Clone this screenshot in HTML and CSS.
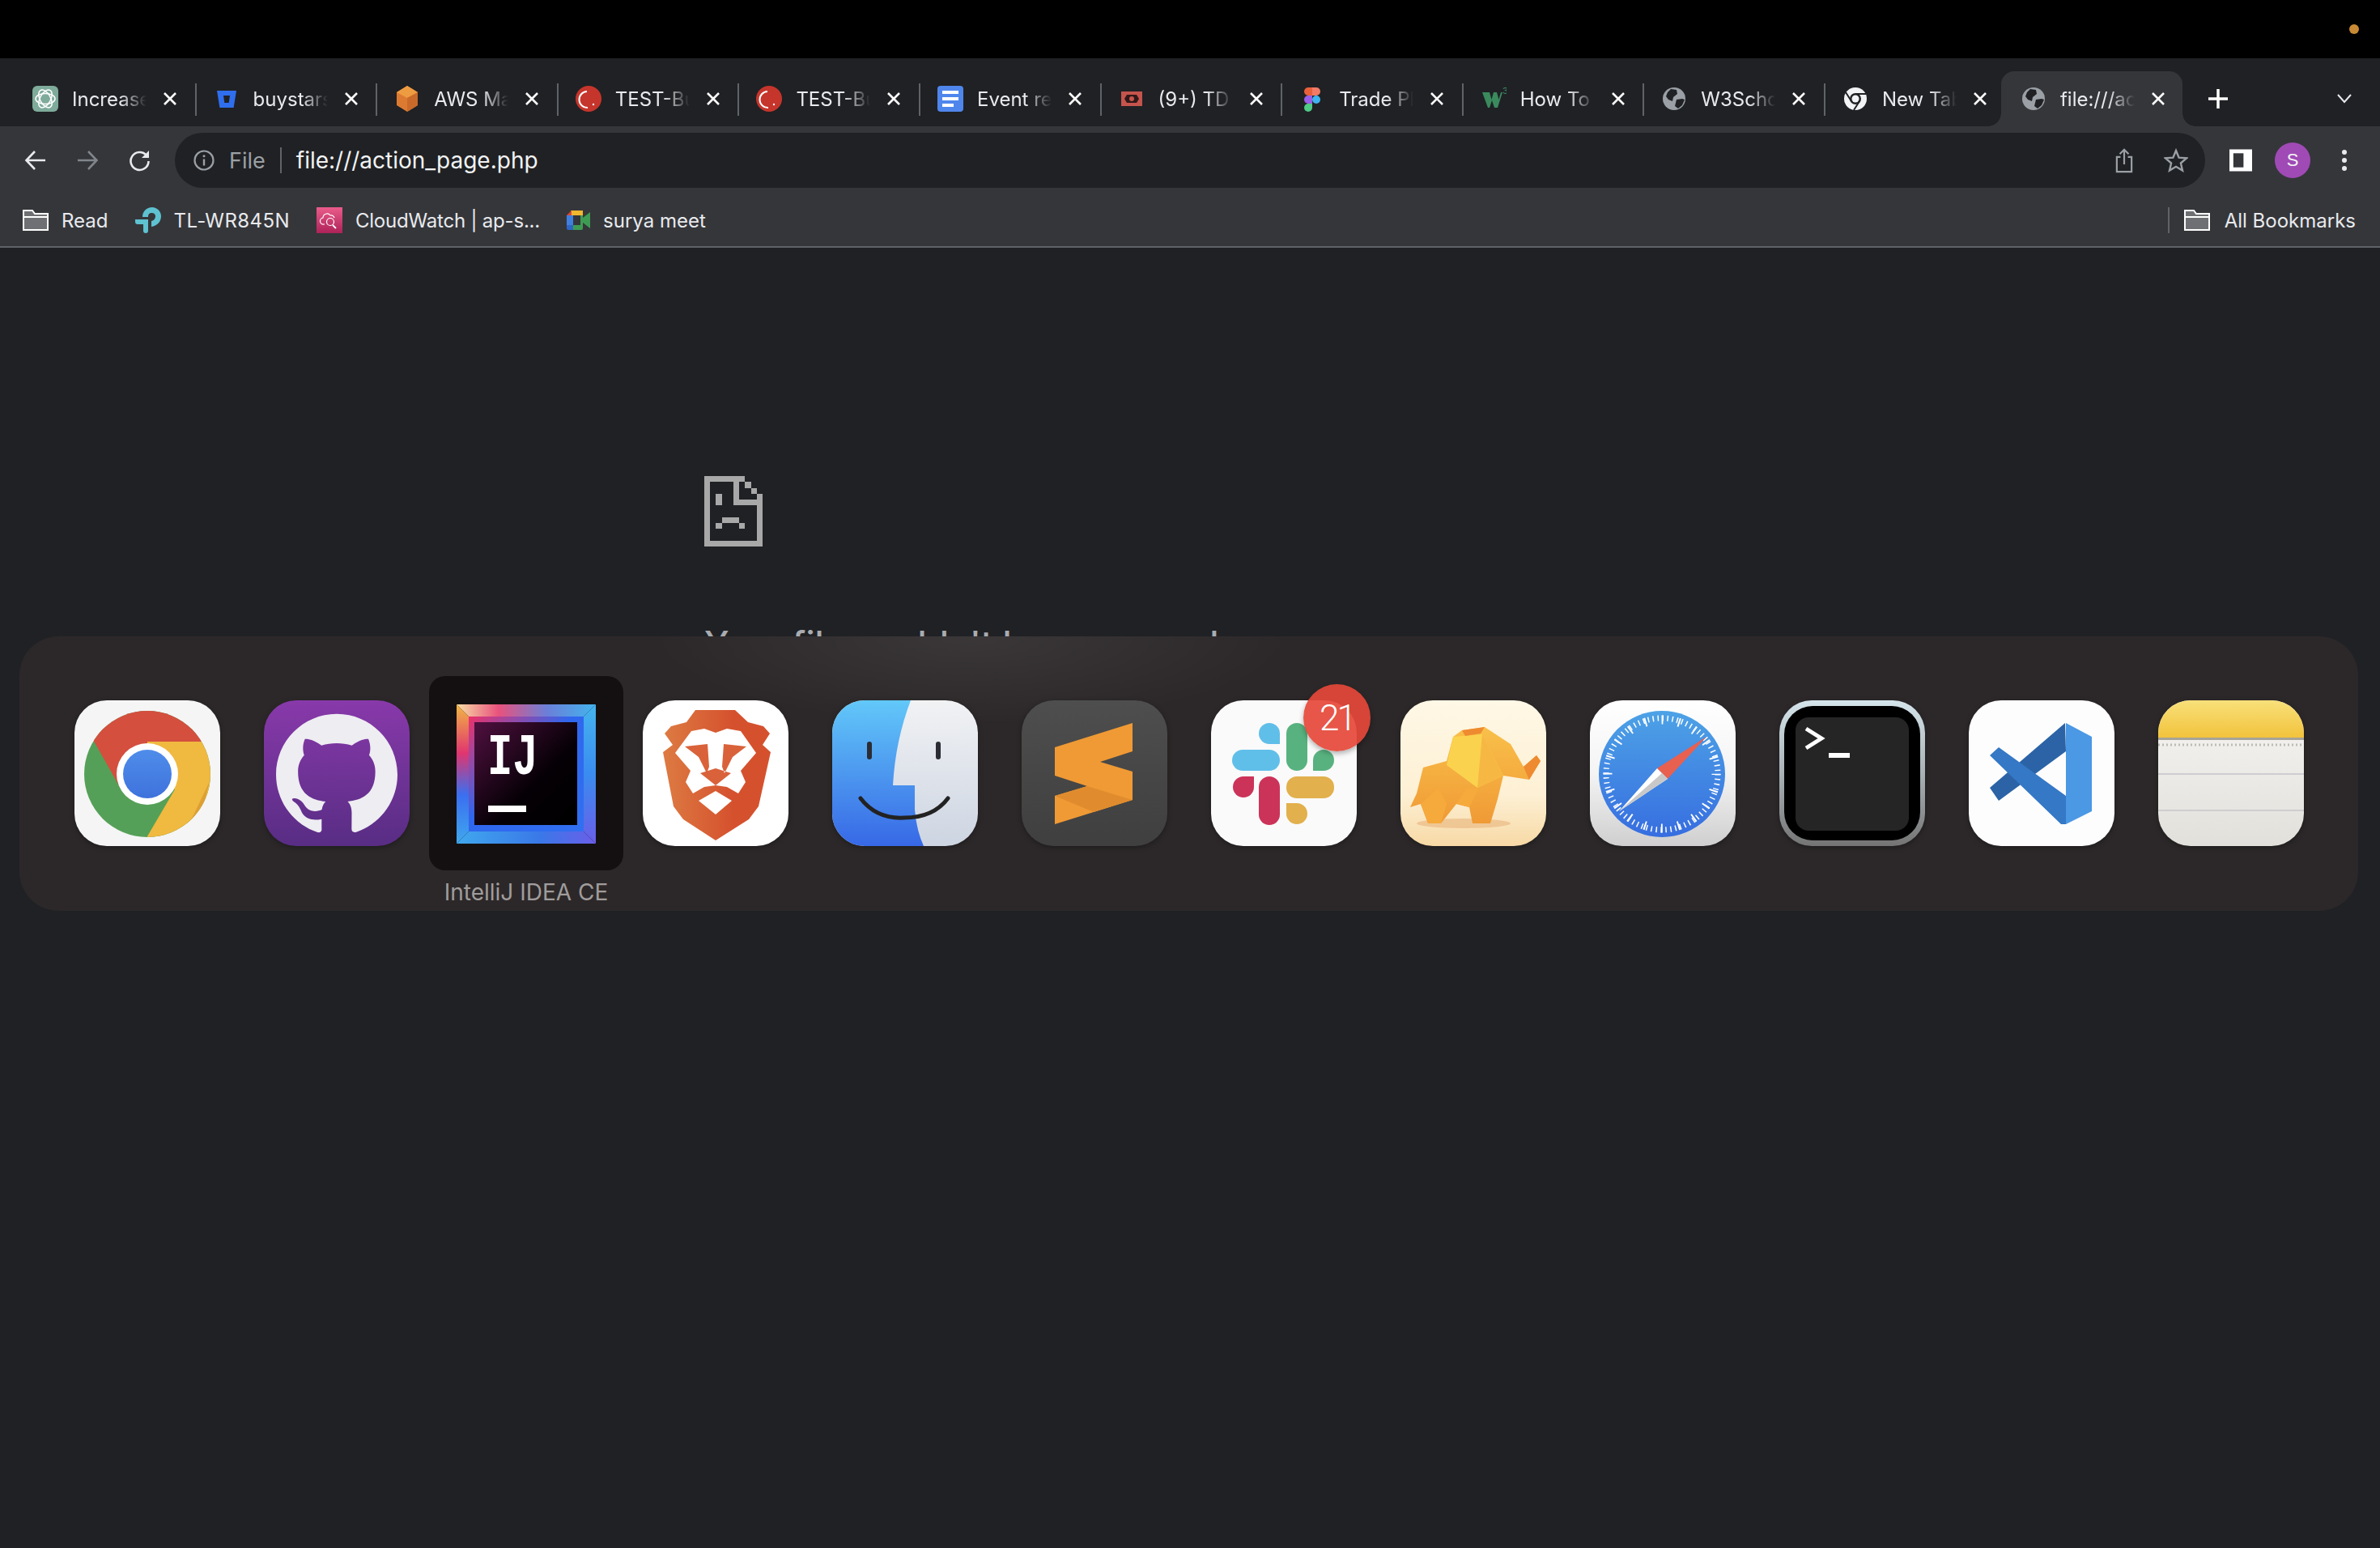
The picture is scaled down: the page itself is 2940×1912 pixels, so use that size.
FILE: index.html
```html
<!DOCTYPE html>
<html lang="en">

<head>
    <meta charset="UTF-8">
    <title>file:///action_page.php</title>
    <link rel="stylesheet" href="styles.css">
</head>

<body>
    <!-- menu bar -->
    <div class="menubar"><span class="mic-dot"></span></div>

    <!-- tabs -->
    <div class="tabstrip">
        <div class="tab">
            <svg class="favicon" viewBox="0 0 32 32"><rect width="32" height="32" rx="6" fill="#7fab9b"/><g fill="none" stroke="#fff" stroke-width="1.500"><ellipse cx="16" cy="16" rx="12" ry="6.500"/><ellipse cx="16" cy="16" rx="12" ry="6.500" transform="rotate(60 16 16)"/><ellipse cx="16" cy="16" rx="12" ry="6.500" transform="rotate(120 16 16)"/></g></svg>
            <span class="tab-title">Increase</span>
            <svg class="tab-close" viewBox="0 0 16 16"><use href="#closeX"/></svg>
        </div>
        <i class="tab-sep"></i>
        <div class="tab">
            <svg class="favicon" viewBox="0 0 32 32"><path d="M4 6h24l-3.400 21H7.400z" fill="#2f6fed"/><path d="M12 12h8l-1.300 9h-5.400z" fill="#202124"/></svg>
            <span class="tab-title">buystars</span>
            <svg class="tab-close" viewBox="0 0 16 16"><use href="#closeX"/></svg>
        </div>
        <i class="tab-sep"></i>
        <div class="tab">
            <svg class="favicon" viewBox="0 0 32 32"><path d="M16 0l13 8v16l-13 8-13-8V8z" fill="#dd7a32"/><path d="M16 0l13 8-13 7-13-7z" fill="#ee9c42"/><path d="M16 15l13-7v16l-13 8z" fill="#c96a2a"/></svg>
            <span class="tab-title">AWS Ma</span>
            <svg class="tab-close" viewBox="0 0 16 16"><use href="#closeX"/></svg>
        </div>
        <i class="tab-sep"></i>
        <div class="tab">
            <svg class="favicon" viewBox="0 0 32 32"><circle cx="16" cy="16" r="16" fill="#c5352c"/><path d="M14 7a10 10 0 0 0 1 20" fill="none" stroke="#fff" stroke-width="2"/><circle cx="22" cy="23" r="1.200" fill="#fff"/></svg>
            <span class="tab-title">TEST-Bu</span>
            <svg class="tab-close" viewBox="0 0 16 16"><use href="#closeX"/></svg>
        </div>
        <i class="tab-sep"></i>
        <div class="tab">
            <svg class="favicon" viewBox="0 0 32 32"><circle cx="16" cy="16" r="16" fill="#c5352c"/><path d="M14 7a10 10 0 0 0 1 20" fill="none" stroke="#fff" stroke-width="2"/><circle cx="22" cy="23" r="1.200" fill="#fff"/></svg>
            <span class="tab-title">TEST-Bu</span>
            <svg class="tab-close" viewBox="0 0 16 16"><use href="#closeX"/></svg>
        </div>
        <i class="tab-sep"></i>
        <div class="tab">
            <svg class="favicon" viewBox="0 0 32 32"><rect width="32" height="32" rx="4" fill="#4f86ec"/><path d="M6 6h20v4H6zM6 14h20v4H6zM6 22h14v4H6z" fill="#fff"/></svg>
            <span class="tab-title">Event re</span>
            <svg class="tab-close" viewBox="0 0 16 16"><use href="#closeX"/></svg>
        </div>
        <i class="tab-sep"></i>
        <div class="tab">
            <svg class="favicon" viewBox="0 0 32 32"><rect x="3" y="7" width="26" height="18" fill="#c5544d"/><path d="M7 16l3-5h12l3 5-3 5H10z" fill="#301818"/><ellipse cx="16" cy="16" rx="3" ry="3" fill="#c5544d"/></svg>
            <span class="tab-title">(9+) TD</span>
            <svg class="tab-close" viewBox="0 0 16 16"><use href="#closeX"/></svg>
        </div>
        <i class="tab-sep"></i>
        <div class="tab">
            <svg class="favicon" viewBox="0 0 32 32"><path d="M6 7a5 5 0 0 1 5-5h5v10h-5a5 5 0 0 1-5-5z" fill="#e8603c"/><path d="M16 2h5a5 5 0 0 1 0 10h-5z" fill="#f27a66"/><path d="M6 17a5 5 0 0 1 5-5h5v10h-5a5 5 0 0 1-5-5z" fill="#9a5ee8"/><circle cx="21" cy="17" r="5" fill="#3fb4f0"/><path d="M6 27a5 5 0 0 1 5-5h5v5a5 5 0 0 1-10 0z" fill="#4fcb85"/></svg>
            <span class="tab-title">Trade Pl</span>
            <svg class="tab-close" viewBox="0 0 16 16"><use href="#closeX"/></svg>
        </div>
        <i class="tab-sep"></i>
        <div class="tab">
            <svg class="favicon" viewBox="0 0 32 32"><path d="M2 8h9l2.500 9L16 8h4l2.500 9L25 8h2l-6 19h-4l-3-9-3 9H9z" fill="#3a8a5e"/><text x="27" y="10" class="w3-mark">3</text></svg>
            <span class="tab-title">How To</span>
            <svg class="tab-close" viewBox="0 0 16 16"><use href="#closeX"/></svg>
        </div>
        <i class="tab-sep"></i>
        <div class="tab">
            <svg class="favicon" viewBox="0 0 32 32"><use href="#globe"/></svg>
            <span class="tab-title">W3Schoo</span>
            <svg class="tab-close" viewBox="0 0 16 16"><use href="#closeX"/></svg>
        </div>
        <i class="tab-sep"></i>
        <div class="tab">
            <svg class="favicon" viewBox="0 0 32 32"><circle cx="16" cy="16" r="14" fill="#f1f3f4"/><path d="M16 10h13M21 19l-7 11M11 19L4 8" stroke="#202124" stroke-width="2" fill="none"/><circle cx="16" cy="16" r="7" fill="#202124"/><circle cx="16" cy="16" r="4.500" fill="#f1f3f4"/></svg>
            <span class="tab-title">New Tab</span>
            <svg class="tab-close" viewBox="0 0 16 16"><use href="#closeX"/></svg>
        </div>
        <div class="tab tab-active">
            <svg class="favicon" viewBox="0 0 32 32"><use href="#globe"/></svg>
            <span class="tab-title">file:///ac</span>
            <svg class="tab-close" viewBox="0 0 16 16"><use href="#closeX"/></svg>
        </div>
        <svg class="newtab" viewBox="0 0 24 24"><path d="M12 0v24M0 12h24" stroke="#fff" stroke-width="3.500"/></svg>
        <svg class="tabmenu" viewBox="0 0 18 12"><path d="M1 1l8 9 8-9" fill="none" stroke="#e8eaed" stroke-width="2"/></svg>
    </div>

    <!-- toolbar -->
    <div class="toolbar">
        <div class="navrow">
            <button class="navbtn">
                <svg viewBox="0 0 28 28"><path d="M26 14H3M13 3L2.500 14 13 25" fill="none" stroke="#e8eaed" stroke-width="2.600"/></svg>
            </button>
            <button class="navbtn">
                <svg viewBox="0 0 28 28"><path d="M2 14h23M15 3l10.500 11L15 25" fill="none" stroke="#80868b" stroke-width="2.600"/></svg>
            </button>
            <button class="navbtn">
                <svg viewBox="0 0 28 28"><path d="M23 8a11 11 0 1 0 2.500 7" fill="none" stroke="#e8eaed" stroke-width="2.600"/><path d="M26 2v9h-9z" fill="#e8eaed"/></svg>
            </button>
            <div class="omnibox">
                <svg class="info-icon" viewBox="0 0 26 26"><circle cx="13" cy="13" r="11.500" fill="none" stroke="#9aa0a6" stroke-width="2.200"/><path d="M13 11.500v8" stroke="#9aa0a6" stroke-width="2.400"/><circle cx="13" cy="7.800" r="1.500" fill="#9aa0a6"/></svg>
                <span class="scheme">File</span>
                <i class="omni-sep"></i>
                <span class="url">file:///action_page.php</span>
                <svg class="share-icon" viewBox="0 0 24 34"><path d="M7 12H2v20h20V12h-5M12 22V2M6 8l6-6 6 6" fill="none" stroke="#9aa0a6" stroke-width="2.400"/></svg>
                <svg class="star-icon" viewBox="0 0 30 30"><path d="M15 3l3.600 8.600 9.400.8-7.100 6.100 2.100 9.100L15 22.800l-8 4.800 2.100-9.100L2 12.400l9.400-.8z" fill="none" stroke="#9aa0a6" stroke-width="2.400"/></svg>
            </div>
            <div class="tool-right">
                <button class="navbtn">
                    <svg class="panel-icon" viewBox="0 0 29 28"><rect x="2.500" y="2.500" width="24" height="23" fill="none" stroke="#fff" stroke-width="5"/><rect x="18" y="2" width="9" height="24" fill="#fff"/></svg>
                </button>
                <button class="navbtn"><span class="avatar">S</span></button>
                <button class="navbtn">
                    <svg class="dots" viewBox="0 0 6 28"><circle cx="3" cy="4" r="3" fill="#e8eaed"/><circle cx="3" cy="14" r="3" fill="#e8eaed"/><circle cx="3" cy="24" r="3" fill="#e8eaed"/></svg>
                </button>
            </div>
        </div>
        <div class="bookmarks">
            <div class="bm">
                <svg class="bm-icon" viewBox="0 0 32 26"><use href="#folder"/></svg>
                <span>Read</span>
            </div>
            <div class="bm bm-wide">
                <svg class="bm-icon" viewBox="0 0 32 32"><path d="M9 12C9 5 14 0 21 0c6 0 11 5 11 11 0 7-5 12-12 13v-7c3-.5 5-3 5-6 0-2.500-2-4-4.500-4S16 8 16 12z" fill="#5ec2d1"/><path d="M0 15h16v14a3 3 0 0 1-6 0v-8H3a3 3 0 0 1-3-3z" fill="#5ec2d1"/></svg>
                <span>TL-WR845N</span>
            </div>
            <div class="bm bm-narrow">
                <svg class="bm-icon" viewBox="0 0 32 32"><defs><linearGradient id="cwBg" x1="0" y1="0" x2="0" y2="1"><stop offset="0" stop-color="#ea5c8a"/><stop offset="1" stop-color="#ae2259"/></linearGradient></defs><rect width="32" height="32" fill="url(#cwBg)"/><path d="M10 21H9a4 4 0 0 1-1-8 5 5 0 0 1 9-3 4 4 0 0 1 5 3" fill="none" stroke="#fff" stroke-width="1.200"/><circle cx="17" cy="18" r="4.500" fill="none" stroke="#fff" stroke-width="1.200"/><path d="M20 22l4 4" stroke="#fff" stroke-width="1.800"/></svg>
                <span>CloudWatch | ap-s...</span>
            </div>
            <div class="bm">
                <svg class="meet-icon" viewBox="0 0 29 24"><path d="M5 0h15v6H5z" fill="#f0b72f"/><path d="M0 6l6-6v6z" fill="#d9493a"/><path d="M0 6h8v12H0z" fill="#3f7fe0"/><path d="M0 18h8v6H2a2 2 0 0 1-2-2z" fill="#2e66c7"/><path d="M8 18h12v4a2 2 0 0 1-2 2H8z" fill="#3e9c52"/><path d="M17 6h3v12h-3zM20 9l9-7v20l-9-7z" fill="#3e9c52"/><rect x="8" y="6" width="9" height="12" fill="#35363a"/></svg>
                <span>surya meet</span>
            </div>
            <div class="all-bookmarks">
                <i class="bm-sep"></i>
                <svg class="bm-icon" viewBox="0 0 32 26"><use href="#folder"/></svg>
                <span>All Bookmarks</span>
            </div>
        </div>
    </div>

    <!-- error page behind the switcher -->
    <main class="errorpage">
        <svg class="sad-file" viewBox="0 0 10 12" preserveAspectRatio="none" shape-rendering="crispEdges"><path fill="#a8a8a8" d="M0 0h7v1H6v3h3V3h1v9H0zM1 1v10h8V5H5V1zM7 1h1v1H7zM8 2h1v1H8zM2 3h1v2H2zM3 7h3v1H3zM2 8h1v1H2zM6 8h1v1H6z"/></svg>
        <h1>Your file couldn't be accessed</h1>
    </main>

    <!-- app switcher -->
    <div class="switcher">
        <div class="app">
            <svg viewBox="0 0 180 180"><defs><clipPath id="chromeClip"><circle cx="90" cy="91" r="78"/></clipPath><linearGradient id="chromeBlue" x1="0" y1="0" x2="0" y2="1"><stop offset="0" stop-color="#4f8dea"/><stop offset="1" stop-color="#3e72dc"/></linearGradient></defs><rect width="180" height="180" rx="40" fill="#f5f5f5"/><g clip-path="url(#chromeClip)"><rect width="180" height="180" fill="#55a058"/><path d="M22 47l35 62 33-18V51h68L180 0H0z" fill="#d44f3e"/><path d="M90 51h68l22 40v89H90v-12l34-58-34-19z" fill="#f0b940"/><path d="M90 169a78 78 0 0 0 55-23l22-46-10 40-45 38-22 2z" fill="#d99a30" opacity=".8"/></g><circle cx="90" cy="91" r="38" fill="#fff"/><circle cx="90" cy="91" r="30" fill="url(#chromeBlue)"/></svg>
        </div>
        <div class="app">
            <svg viewBox="0 0 180 180"><defs><linearGradient id="ghBg" x1="0" y1="0" x2="0" y2="1"><stop offset="0" stop-color="#8839aa"/><stop offset="1" stop-color="#582d84"/></linearGradient></defs><rect width="180" height="180" rx="40" fill="url(#ghBg)"/><path transform="translate(15 15) scale(6.250)" fill="#eeedf2" d="M12 .297c-6.630 0-12 5.373-12 12 0 5.303 3.438 9.800 8.205 11.385.6.113.82-.258.82-.577 0-.285-.01-1.040-.015-2.040-3.338.724-4.042-1.610-4.042-1.610C4.422 18.070 3.633 17.700 3.633 17.700c-1.087-.744.084-.729.084-.729 1.205.084 1.838 1.236 1.838 1.236 1.070 1.835 2.809 1.305 3.495.998.108-.776.417-1.305.76-1.605-2.665-.3-5.466-1.332-5.466-5.930 0-1.310.465-2.380 1.235-3.220-.135-.303-.54-1.523.105-3.176 0 0 1.005-.322 3.300 1.230.96-.267 1.980-.399 3-.405 1.020.006 2.040.138 3 .405 2.280-1.552 3.285-1.230 3.285-1.230.645 1.653.24 2.873.12 3.176.765.84 1.230 1.910 1.230 3.220 0 4.610-2.805 5.625-5.475 5.920.42.36.81 1.096.81 2.220 0 1.606-.015 2.896-.015 3.286 0 .315.21.69.825.57C20.565 22.092 24 17.592 24 12.297c0-6.627-5.373-12-12-12"/></svg>
        </div>
        <div class="app app-selected">
            <svg class="ij-icon" viewBox="0 0 172 172"><defs><linearGradient id="ijTop"><stop offset="0" stop-color="#f7dfa6"/><stop offset=".3" stop-color="#e9527c"/><stop offset=".65" stop-color="#6a7fd8"/><stop offset="1" stop-color="#42b4ee"/></linearGradient><linearGradient id="ijLeft" x1="0" y1="0" x2="0" y2="1"><stop offset="0" stop-color="#f2b843"/><stop offset=".35" stop-color="#e0356f"/><stop offset=".65" stop-color="#3a6ff0"/><stop offset="1" stop-color="#40a8ee"/></linearGradient><linearGradient id="ijRight" x1="0" y1="0" x2="0" y2="1"><stop offset="0" stop-color="#45b4ee"/><stop offset=".5" stop-color="#3a8cf0"/><stop offset="1" stop-color="#6a5ee8"/></linearGradient><linearGradient id="ijBottom"><stop offset="0" stop-color="#40a8ee"/><stop offset=".6" stop-color="#3a78e8"/><stop offset="1" stop-color="#6a5ee8"/></linearGradient><linearGradient id="ijMid" x1="0" y1="0" x2="1" y2="1"><stop offset="0" stop-color="#ee3168"/><stop offset=".45" stop-color="#2f66ee"/><stop offset="1" stop-color="#3070f0"/></linearGradient><linearGradient id="ijInner" x1="0" y1="0" x2="1" y2="1"><stop offset="0" stop-color="#501040"/><stop offset=".6" stop-color="#050005"/><stop offset="1" stop-color="#000"/></linearGradient></defs><path d="M0 0h172l-15 15H15z" fill="url(#ijTop)"/><path d="M0 0l15 15v142L0 172z" fill="url(#ijLeft)"/><path d="M172 0l-15 15v142l15 15z" fill="url(#ijRight)"/><path d="M0 172l15-15h142l15 15z" fill="url(#ijBottom)"/><rect x="15" y="15" width="142" height="142" fill="url(#ijMid)"/><rect x="22" y="22" width="127" height="127" fill="url(#ijInner)"/><text x="38" y="61.500" class="ij-letters" transform="scale(1 1.400)">IJ</text><rect x="39" y="125" width="47" height="8" fill="#fff"/></svg>
            <span class="app-label">IntelliJ IDEA CE</span>
        </div>
        <div class="app">
            <svg viewBox="0 0 180 180"><defs><linearGradient id="braveBg"><stop offset="0" stop-color="#dd7b42"/><stop offset=".65" stop-color="#d5512e"/></linearGradient></defs><rect width="180" height="180" rx="40" fill="#fff"/><path d="M65 12h49l16 15 19 5 8 9-9 14 10 9-15 67-12 16-41 26-40-26-12-16-13-67 12-9-10-14 8-9 19-5z" fill="url(#braveBg)"/><path d="M60 38l16-3 14 5 14-5 17 3 19 27-19 22 6 14-9 14-14-8-14-2-14 2-14 8-9-14 6-14-19-22z" fill="#fff"/><path d="M52 57l28-3 2 28-3 8-10-20zM128 57l-28-3-2 28 3 8 10-20zM71 90l19-6 19 6-19 15z" fill="#d9623a"/><path d="M69 124l21-12 20 12-20 17z" fill="#fff"/></svg>
        </div>
        <div class="app">
            <svg viewBox="0 0 180 180"><defs><linearGradient id="finderL" x1="0" y1="0" x2="0" y2="1"><stop offset="0" stop-color="#62c8f9"/><stop offset="1" stop-color="#3768e6"/></linearGradient><linearGradient id="finderR" x1="0" y1="0" x2="0" y2="1"><stop offset="0" stop-color="#f1f2f4"/><stop offset="1" stop-color="#cdd5e2"/></linearGradient><clipPath id="finderClip"><rect width="180" height="180" rx="40"/></clipPath></defs><g clip-path="url(#finderClip)"><rect width="180" height="180" fill="url(#finderR)"/><path d="M0 0h97Q78 50 75 105h27v30q2 25 11 45H0z" fill="url(#finderL)"/></g><path d="M46 54v16M131 54v16" stroke="#2c2c33" stroke-width="6" stroke-linecap="round"/><path d="M35 121q20 26 54 24q36 0 54-24" fill="none" stroke="#222" stroke-width="5" stroke-linecap="round"/></svg>
        </div>
        <div class="app">
            <svg viewBox="0 0 180 180"><defs><linearGradient id="subBg" x1="0" y1="0" x2="0" y2="1"><stop offset="0" stop-color="#4e4e4e"/><stop offset="1" stop-color="#3f3f3f"/></linearGradient></defs><rect width="180" height="180" rx="40" fill="url(#subBg)"/><path d="M137 28L41 58v35l40 13-40 12v35l96-30V88L97 76l40-13z" fill="#f09a35"/><path d="M81 106l56 17-48 15-48-20z" fill="#e08c2e"/></svg>
        </div>
        <div class="app">
            <svg viewBox="0 0 180 180"><rect width="180" height="180" rx="40" fill="#fafafa"/><path d="M85 54H72a13 13 0 1 1 13-13z" fill="#60bfe9"/><rect x="26" y="61" width="59" height="26" rx="13" fill="#60bfe9"/><rect x="93" y="28" width="26" height="59" rx="13" fill="#58b27f"/><path d="M126 87V74a13 13 0 1 1 13 13z" fill="#58b27f"/><path d="M53 94v13a13 13 0 1 1-13-13z" fill="#cc3359"/><rect x="59" y="94" width="26" height="60" rx="13" fill="#cc3359"/><rect x="93" y="94" width="59" height="27" rx="13" fill="#e2b04c"/><path d="M93 127h13a13 13 0 1 1-13 13z" fill="#e2b04c"/></svg>
            <span class="badge">21</span>
        </div>
        <div class="app">
            <svg viewBox="0 0 180 180"><defs><linearGradient id="tpBg" x1="0" y1="0" x2="0" y2="1"><stop offset="0" stop-color="#fff8e6"/><stop offset=".65" stop-color="#fdf0d4"/><stop offset="1" stop-color="#f7d9a5"/></linearGradient><linearGradient id="tpBody" x1="0" y1="0" x2="0" y2="1"><stop offset="0" stop-color="#f9c04a"/><stop offset="1" stop-color="#f09a35"/></linearGradient></defs><rect width="180" height="180" rx="40" fill="url(#tpBg)"/><ellipse cx="78" cy="152" rx="58" ry="6" fill="#e8b47c" opacity=".6"/><path d="M76 37l28-4 32 21 16 28 16-14 5 7-14 23-32-5-7 29-9 30H89l-4-20-16-4-19 24H34l-9-24-13 4 8-17 8-32 29-8 8-30z" fill="url(#tpBody)"/><path d="M101 42l26 51-32 15-38-28 8-35z" fill="#fbd24e"/><path d="M101 42l26 51-32 15z" fill="#f6b843"/><path d="M76 37l28-4-5 8-19 3z" fill="#ee8a30"/><path d="M152 82l16-14 5 7-14 23z" fill="#ee8a30"/><path d="M85 132l-16-4 13-20 14 2zM34 152l-9-24 22-20 10 20-7 24z" fill="#f6aa3c"/></svg>
        </div>
        <div class="app">
            <svg viewBox="0 0 180 180"><defs><linearGradient id="safBg" x1="0" y1="0" x2="0" y2="1"><stop offset="0" stop-color="#fff"/><stop offset=".5" stop-color="#f4f4f4"/><stop offset="1" stop-color="#cfcfcf"/></linearGradient><linearGradient id="safBlue" x1="0" y1="0" x2="0" y2="1"><stop offset="0" stop-color="#4da2e6"/><stop offset="1" stop-color="#376ee0"/></linearGradient></defs><rect width="180" height="180" rx="40" fill="url(#safBg)"/><circle cx="89" cy="91" r="78" fill="url(#safBlue)"/><circle cx="89" cy="91" r="69" fill="none" stroke="#fff" stroke-width="7" stroke-dasharray="1.500 4.520"/><circle cx="89" cy="91" r="67" fill="none" stroke="#fff" stroke-width="11" stroke-dasharray="2 19.050" stroke-dashoffset="1"/><path d="M144 45L83 84l13 13z" fill="#e8604f"/><path d="M36 137l47-53 13 13z" fill="#fff"/><path d="M36 137l60-40-7-7z" fill="#c8c8c8"/></svg>
        </div>
        <div class="app">
            <svg viewBox="0 0 180 180"><defs><linearGradient id="termEdge" x1="0" y1="0" x2="0" y2="1"><stop offset="0" stop-color="#d4e4ea"/><stop offset=".5" stop-color="#a9b2b6"/><stop offset="1" stop-color="#747474"/></linearGradient></defs><rect width="180" height="180" rx="40" fill="url(#termEdge)"/><rect x="6" y="7" width="168" height="166" rx="35" fill="#000"/><rect x="20" y="21" width="140" height="140" rx="16" fill="#252525"/><path d="M33 35l19 12-19 12" fill="none" stroke="#fff" stroke-width="5"/><rect x="61" y="65" width="26" height="6" fill="#fff"/></svg>
        </div>
        <div class="app">
            <svg viewBox="0 0 180 180"><rect width="180" height="180" rx="40" fill="#fdfdfd"/><path d="M119 28l-93 80 11 16 83-61z" fill="#2b63a6"/><path d="M37 58L26 68l88 85h6v-35z" fill="#3478c6"/><path d="M120 28l32 17v92l-32 16z" fill="#4b98e5"/></svg>
        </div>
        <div class="app">
            <svg viewBox="0 0 180 180"><defs><linearGradient id="notesTop" x1="0" y1="0" x2="0" y2="1"><stop offset="0" stop-color="#f8e07a"/><stop offset="1" stop-color="#f2c33c"/></linearGradient><linearGradient id="notesBody" x1="0" y1="0" x2="0" y2="1"><stop offset="0" stop-color="#f6f5f2"/><stop offset="1" stop-color="#e2e0db"/></linearGradient><clipPath id="notesClip"><rect width="180" height="180" rx="40"/></clipPath></defs><g clip-path="url(#notesClip)"><rect width="180" height="180" fill="url(#notesBody)"/><rect width="180" height="46" fill="url(#notesTop)"/><rect y="46" width="180" height="3" fill="#a8a397"/><path d="M0 55h180" stroke="#bdbbb5" stroke-width="3" stroke-dasharray="2 3"/><path d="M0 91h180M0 136h180" stroke="#cfcdd0" stroke-width="2"/></g></svg>
        </div>
    </div>

    <!-- shared icons -->
    <svg class="sprites">
        <symbol id="globe" viewBox="0 0 32 32"><circle cx="16" cy="16" r="14" fill="#9aa0a6"/><path d="M12 4l7 1 1 5-5 4-1 5-5-2-3-4 2-5zM19 17l7-1 3 1-3 7-5 4-4-3 1-4z" fill="#202124"/></symbol>
        <symbol id="folder" viewBox="0 0 32 26"><path d="M1 25V1h11l3 4h16v20z" fill="#6f7073" stroke="#fff" stroke-width="2"/><path d="M1 9h30" stroke="#fff" stroke-width="2"/></symbol>
        <symbol id="closeX" viewBox="0 0 16 16"><path d="M1 1l14 14M15 1L1 15" stroke="#fff" stroke-width="2.600"/></symbol>
    </svg>
</body>

</html>
```
FILE: styles.css
```css
/* General Reset */
* {
    margin: 0;
    padding: 0;
    box-sizing: border-box;
}

body {
    width: 2940px;
    height: 1912px;
    background: #202124;
    font-family: 'Inter', 'Liberation Sans', sans-serif;
    color: #e8eaed;
    display: flex;
    flex-direction: column;
    position: relative;
    overflow: hidden;
}

svg {
    display: block;
    flex: none;
}

.sprites {
    width: 0;
    height: 0;
}

/* Menu bar */
.menubar {
    height: 72px;
    background: #000;
    display: flex;
    justify-content: flex-end;
    align-items: center;
    padding-right: 26px;
}

.mic-dot {
    width: 12px;
    height: 12px;
    border-radius: 50%;
    background: #c98a35;
}

/* Tabs */
.tabstrip {
    height: 84px;
    background: #202124;
    display: flex;
    align-items: flex-end;
    padding-left: 19px;
}

.tab {
    width: 221.6px;
    height: 68px;
    display: flex;
    align-items: center;
    padding-left: 21px;
    flex: none;
}

.tab-sep {
    width: 2px;
    height: 40px;
    background: #5f6368;
    margin-bottom: 13px;
    flex: none;
}

.favicon {
    width: 32px;
    height: 32px;
    margin-right: 17px;
}

.tab-title {
    width: 92px;
    font-size: 24px;
    white-space: nowrap;
    overflow: hidden;
    color: #e8eaed;
    -webkit-mask-image: linear-gradient(90deg, #000 65%, transparent 100%);
    mask-image: linear-gradient(90deg, #000 65%, transparent 100%);
}

.tab-close {
    width: 16px;
    height: 16px;
    margin-left: 21px;
}

.tab-active {
    width: 224px;
    background: #35363a;
    border-radius: 16px 16px 0 0;
    padding-left: 24px;
    margin-left: -4.6px;
    position: relative;
}

.tab-active::before,
.tab-active::after {
    content: '';
    position: absolute;
    bottom: 0;
    width: 16px;
    height: 16px;
}

.tab-active::before {
    left: -16px;
    background: radial-gradient(circle at 0 0, #202124 15.5px, #35363a 16px);
}

.tab-active::after {
    right: -16px;
    background: radial-gradient(circle at 100% 0, #202124 15.5px, #35363a 16px);
}

.newtab {
    width: 24px;
    height: 24px;
    margin: 0 0 22px 32px;
}

.tabmenu {
    width: 18px;
    height: 12px;
    margin: 0 0 28px 135px;
}

/* Toolbar */
.toolbar {
    height: 150px;
    background: #35363a;
    border-bottom: 2px solid #5f6368;
    flex: none;
}

.navrow {
    height: 84px;
    display: flex;
    align-items: center;
    padding: 0 12px;
}

.navbtn {
    width: 64px;
    height: 64px;
    background: none;
    border: none;
    display: flex;
    align-items: center;
    justify-content: center;
    flex: none;
}

.navbtn svg {
    width: 28px;
    height: 28px;
}

.omnibox {
    flex: 1;
    height: 68px;
    margin: 0 12px;
    background: #202124;
    border-radius: 34px;
    display: flex;
    align-items: center;
    padding: 0 21px 0 23px;
}

.info-icon {
    width: 26px;
    height: 26px;
    margin-right: 18px;
}

.scheme {
    font-size: 27px;
    color: #9aa0a6;
}

.omni-sep {
    width: 2px;
    height: 32px;
    background: #5f6368;
    margin: 0 18px;
}

.url {
    font-size: 28px;
    color: #f1f3f4;
    flex: 1;
}

.share-icon {
    width: 22px;
    height: 31px;
    margin-right: 38px;
}

.star-icon {
    width: 30px;
    height: 30px;
}

.tool-right {
    display: flex;
    align-items: center;
}

.avatar {
    width: 44px;
    height: 44px;
    border-radius: 50%;
    background: #a04ab5;
    color: #f1f3f4;
    font-size: 22px;
    display: flex;
    align-items: center;
    justify-content: center;
}

.navbtn .dots {
    width: 6px;
    height: 28px;
}

/* Bookmarks */
.bookmarks {
    height: 64px;
    display: flex;
    align-items: center;
    padding: 0 30px 0 28px;
    font-size: 24px;
    color: #e8eaed;
}

.bm {
    display: flex;
    align-items: center;
    gap: 16px;
    margin-right: 33px;
}

.bm-wide span {
    letter-spacing: 0.4px;
}

.bm-narrow span {
    letter-spacing: -0.2px;
}

.bm-icon {
    width: 32px;
    height: 32px;
}

.meet-icon {
    width: 29px;
    height: 24px;
}

.all-bookmarks {
    margin-left: auto;
    display: flex;
    align-items: center;
    gap: 18px;
}

.bm-sep {
    width: 2px;
    height: 32px;
    background: #5f6368;
}

/* Error page */
.errorpage {
    padding: 282px 0 0 870px;
}

.sad-file {
    width: 72px;
    height: 87px;
}

.errorpage h1 {
    font-size: 44px;
    font-weight: 500;
    color: #a9acb0;
    margin-top: 93px;
}

/* App switcher, sits over the page */
.switcher {
    position: absolute;
    left: 24px;
    top: 786px;
    width: 2889px;
    height: 339px;
    border-radius: 48px;
    background: #2c2829;
    display: flex;
    gap: 54px;
    padding: 79px 0 0 68px;
}

/* the heading showing through the blurred panel */
.switcher::before {
    content: '';
    position: absolute;
    left: 776px;
    top: 0;
    width: 800px;
    height: 110px;
    background: radial-gradient(ellipse at 50% 0, rgba(255, 255, 255, 0.07), transparent 70%);
}

.app {
    width: 180px;
    height: 180px;
    position: relative;
    flex: none;
}

.app > svg {
    width: 180px;
    height: 180px;
    position: relative;
    filter: drop-shadow(0 2px 3px rgba(0, 0, 0, 0.3));
}

.app-selected::before {
    content: '';
    position: absolute;
    left: -30px;
    top: -30px;
    width: 240px;
    height: 240px;
    border-radius: 20px;
    background: #141011;
}

.app > .ij-icon {
    width: 172px;
    height: 172px;
    left: 4px;
    top: 5px;
    filter: none;
}

.ij-letters {
    font-family: 'Liberation Mono', monospace;
    font-weight: 700;
    font-size: 52px;
    fill: #fff;
}

.w3-mark {
    font-size: 11px;
    fill: #3a8a5e;
}

.app-label {
    position: absolute;
    left: -30px;
    width: 240px;
    top: 220px;
    text-align: center;
    font-size: 28px;
    color: #a09c9c;
    white-space: nowrap;
}

.badge {
    position: absolute;
    left: 114px;
    top: -20px;
    width: 83px;
    height: 83px;
    border-radius: 50%;
    background: rgba(229, 72, 56, 0.92);
    box-shadow: 0 3px 6px rgba(0, 0, 0, 0.3);
    color: #fff;
    font-family: 'Roboto', sans-serif;
    font-weight: 300;
    font-size: 44px;
    letter-spacing: -3px;
    display: flex;
    align-items: center;
    justify-content: center;
}
```
